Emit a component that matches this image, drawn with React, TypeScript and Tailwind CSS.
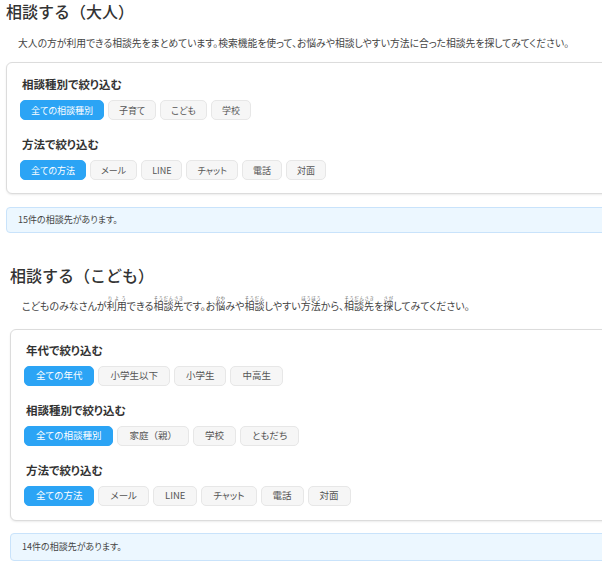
import React from 'react';

type Group = { label: string; options: string[] };

const adultGroups: Group[] = [
  { label: '相談種別で絞り込む', options: ['全ての相談種別', '子育て', 'こども', '学校'] },
  { label: '方法で絞り込む', options: ['全ての方法', 'メール', 'LINE', 'チャット', '電話', '対面'] },
];

const kidGroups: Group[] = [
  { label: '年代で絞り込む', options: ['全ての年代', '小学生以下', '小学生', '中高生'] },
  { label: '相談種別で絞り込む', options: ['全ての相談種別', '家庭（親）', '学校', 'ともだち'] },
  { label: '方法で絞り込む', options: ['全ての方法', 'メール', 'LINE', 'チャット', '電話', '対面'] },
];

function R({ base, ruby }: { base: string; ruby: string }) {
  return (
    <ruby>
      {base}
      <rt className="text-[4.5px] leading-[5px] text-[#666]">{ruby}</rt>
    </ruby>
  );
}

function FilterCard({ groups, wide }: { groups: Group[]; wide?: boolean }) {
  return (
    <div
      className={`w-[640px] border border-[#dcdcdc] rounded-[6px] bg-white shadow-[0_1px_2px_rgba(0,0,0,0.08)] ${
        wide ? 'pt-[13px] pb-[14px] px-[13px]' : 'pt-[14px] pb-[13px] px-[13px]'
      }`}
    >
      {groups.map((g, gi) => (
        <div key={g.label} className={gi === 0 ? '' : 'mt-[17px]'}>
          <p className="text-[11.5px] leading-[14px] font-bold text-[#333] pl-[2px]">{g.label}</p>
          <div className="flex gap-[4px] mt-[9px]">
            {g.options.map((o, i) => (
              <button
                key={o}
                className={`h-[20px] rounded-[5px] leading-none border ${
                  wide ? 'px-[11px] text-[9.5px]' : 'px-[10px] text-[9px]'
                } ${o.includes('（') ? '[font-feature-settings:normal]' : ''} ${
                  i === 0
                    ? 'bg-[#2ba4f5] border-[#2ba4f5] text-white'
                    : 'bg-[#f6f6f6] border-[#e7e7e7] text-[#555]'
                }`}
              >
                {o}
              </button>
            ))}
          </div>
        </div>
      ))}
    </div>
  );
}

function CountBox({ text, tall }: { text: string; tall?: boolean }) {
  return (
    <div
      className={`w-[640px] ${tall ? 'h-[28px] mt-[12px]' : 'h-[26px] mt-[13px]'} flex items-center pl-[11px] border border-[#c9e3fb] bg-[#ecf7ff] rounded-[4px] text-[9px] text-[#444] [font-feature-settings:'palt']`}
    >
      {text}
    </div>
  );
}

export default function App() {
  return (
    <div
      className="w-[602px] h-[564px] overflow-hidden bg-white text-[#333]"
      style={{ fontFamily: '"Noto Sans CJK JP", "Noto Sans", sans-serif' }}
    >
      {/* 大人 */}
      <section className="pl-[6px]">
        <h2 className="text-[16px] leading-[20px] font-medium mt-[1px]">相談する（大人）</h2>
        <p className="mt-[15px] pl-[12px] text-[9.8px] leading-[14px] text-[#444] whitespace-nowrap [font-feature-settings:'palt']">
          大人の方が利用できる相談先をまとめています。検索機能を使って、お悩みや相談しやすい方法に合った相談先を探してみてください。
        </p>
        <div className="mt-[12px] [font-feature-settings:'palt']">
          <FilterCard groups={adultGroups} />
        </div>
        <CountBox text="15件の相談先があります。" />
      </section>

      {/* こども */}
      <section className="pl-[10px] mt-[32px]">
        <h2 className="text-[16px] leading-[20px] font-medium">相談する（こども）</h2>
        <p className="mt-[10px] pl-[12px] text-[10px] leading-[22px] text-[#444] whitespace-nowrap [font-feature-settings:'palt']">
          こどものみなさんが<R base="利用" ruby="りよう" />できる<R base="相談先" ruby="そうだんさき" />です。お
          <R base="悩" ruby="なや" />みや<R base="相談" ruby="そうだん" />しやすい<R base="方法" ruby="ほうほう" />から、
          <R base="相談先" ruby="そうだんさき" />を<R base="探" ruby="さが" />してみてください。
        </p>
        <div className="mt-[12px] [font-feature-settings:'palt']">
          <FilterCard groups={kidGroups} wide />
        </div>
        <CountBox text="14件の相談先があります。" tall />
      </section>
    </div>
  );
}
